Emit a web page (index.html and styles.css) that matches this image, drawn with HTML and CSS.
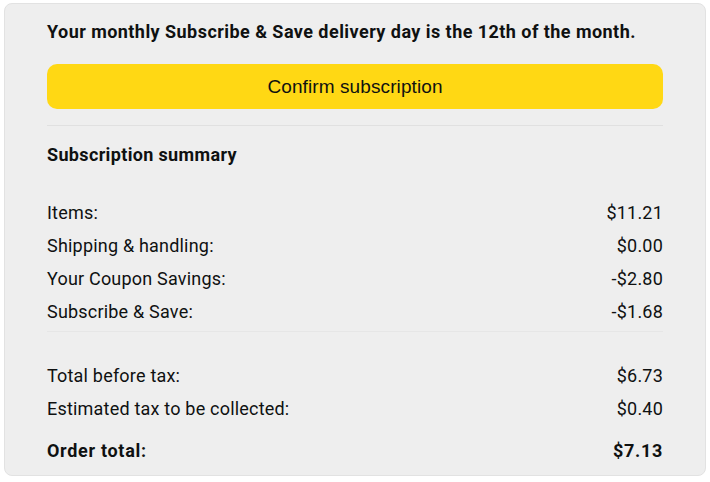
FILE: index.html
```html
<!DOCTYPE html>
<html lang="en">
<head>
    <meta charset="UTF-8">
    <meta name="viewport" content="width=device-width, initial-scale=1.0">
    <title>Subscription summary</title>
    <link rel="stylesheet" href="styles.css">
</head>
<body>
    <div class="card">
        <p class="delivery">Your monthly Subscribe &amp; Save delivery day is the 12th of the month.</p>
        <button class="confirm-btn">Confirm subscription</button>

        <div class="summary">
            <h3>Subscription summary</h3>
            <div class="rows">
                <div class="row"><span>Items:</span><span>$11.21</span></div>
                <div class="row"><span>Shipping &amp; handling:</span><span>$0.00</span></div>
                <div class="row"><span>Your Coupon Savings:</span><span>-$2.80</span></div>
                <div class="row"><span>Subscribe &amp; Save:</span><span>-$1.68</span></div>
            </div>
            <div class="rows totals">
                <div class="row"><span>Total before tax:</span><span>$6.73</span></div>
                <div class="row"><span>Estimated tax to be collected:</span><span>$0.40</span></div>
                <div class="row order-total"><span>Order total:</span><span>$7.13</span></div>
            </div>
        </div>
    </div>
</body>
</html>
```

FILE: styles.css
```css
body {
    margin: 0;
    background-color: #fff;
    font-family: Roboto, "Liberation Sans", Arial, sans-serif;
    color: #0f1111;
}

.card {
    margin: 3px 4px 0;
    height: 473px;
    box-sizing: border-box;
    background-color: #eeeeee;
    border: 1px solid #e2e2e2;
    border-radius: 8px;
    padding: 0 42px 0 42px;
}

.delivery {
    margin: 0;
    padding-top: 16px;
    height: 30px;
    line-height: 24px;
    font-size: 18px;
    font-weight: bold;
    letter-spacing: 0.45px;
}

.confirm-btn {
    display: block;
    width: 100%;
    height: 45px;
    margin-top: 14px;
    border: none;
    border-radius: 10px;
    background-color: #ffd814;
    color: #0f1111;
    font-family: "Liberation Sans", Arial, sans-serif;
    font-size: 19px;
    letter-spacing: 0.1px;
    cursor: pointer;
}

.summary {
    margin-top: 16px;
    border-top: 1px solid #e0e0e0;
}

.summary h3 {
    margin: 0;
    padding-top: 17px;
    line-height: 24px;
    font-size: 18px;
    font-weight: bold;
    letter-spacing: 0.35px;
}

.rows {
    padding: 29px 0 3px;
    border-bottom: 1px solid #e6e6e6;
}

.row {
    display: flex;
    justify-content: space-between;
    line-height: 33px;
    font-size: 18px;
    letter-spacing: 0.2px;
}

.totals {
    padding-top: 27px;
    border-bottom: none;
}

.order-total {
    margin-top: 9px;
    font-weight: bold;
    letter-spacing: 0.7px;
}
```
